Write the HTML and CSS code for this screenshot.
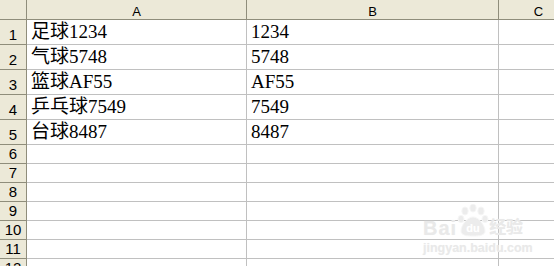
FILE: index.html
```
<!DOCTYPE html>
<html>
<head>
    <meta charset="UTF-8">
    <title>Sheet1</title>
    <link rel="stylesheet" href="styles.css">
</head>
<body>
    <div class="sheet">
        <div class="corner"></div>
        <div class="colhead">A</div>
        <div class="colhead">B</div>
        <div class="colhead">C</div>

        <div class="rowhead">1</div>
        <div class="cell">足球1234</div>
        <div class="cell">1234</div>
        <div class="cell"></div>

        <div class="rowhead">2</div>
        <div class="cell">气球5748</div>
        <div class="cell">5748</div>
        <div class="cell"></div>

        <div class="rowhead">3</div>
        <div class="cell">篮球AF55</div>
        <div class="cell">AF55</div>
        <div class="cell"></div>

        <div class="rowhead">4</div>
        <div class="cell">乒乓球7549</div>
        <div class="cell">7549</div>
        <div class="cell"></div>

        <div class="rowhead">5</div>
        <div class="cell">台球8487</div>
        <div class="cell">8487</div>
        <div class="cell"></div>

        <div class="rowhead">6</div><div class="cell"></div><div class="cell"></div><div class="cell"></div>
        <div class="rowhead">7</div><div class="cell"></div><div class="cell"></div><div class="cell"></div>
        <div class="rowhead">8</div><div class="cell"></div><div class="cell"></div><div class="cell"></div>
        <div class="rowhead">9</div><div class="cell"></div><div class="cell"></div><div class="cell"></div>
        <div class="rowhead">10</div><div class="cell"></div><div class="cell"></div><div class="cell"></div>
        <div class="rowhead">11</div><div class="cell"></div><div class="cell"></div><div class="cell"></div>
        <div class="rowhead">12</div><div class="cell"></div><div class="cell"></div><div class="cell"></div>
    </div>

    <!-- baidu jingyan watermark -->
    <div class="mark">
        <div class="mark-top">
            <span class="mark-bai">Bai</span>
            <svg class="mark-paw" width="32" height="34" viewBox="0 0 32 34">
                <ellipse cx="8" cy="7" rx="3.2" ry="4" />
                <ellipse cx="16" cy="4" rx="3.2" ry="4" />
                <ellipse cx="24" cy="7" rx="3.2" ry="4" />
                <ellipse cx="4" cy="15" rx="3" ry="3.6" />
                <ellipse cx="28" cy="15" rx="3" ry="3.6" />
                <path d="M16 13 C10 13 4 22 4 27 C4 31 9 32 16 32 C23 32 28 31 28 27 C28 22 22 13 16 13 Z" />
                <text x="16" y="28" text-anchor="middle">du</text>
            </svg>
            <span class="mark-cn">经验</span>
        </div>
        <div class="mark-url">jingyan.baidu.com</div>
    </div>
</body>
</html>
```

FILE: styles.css
```
body{
    margin:0;
    overflow:hidden;
    background:#fff;
}
.sheet{
    display:grid;
    grid-template-columns:27px 220px 252px 80px;
    grid-template-rows:20px repeat(5, 25px) repeat(7, 19px);
}
.sheet>div{
    box-sizing:border-box;
    overflow:hidden;
    white-space:nowrap;
}
.corner,
.colhead,
.rowhead{
    background:#ece9d8;
    border-right:solid 1px #8f8d7b;
    border-bottom:solid 1px #8f8d7b;
    color:#000;
    font-family:"Liberation Sans", Arial, sans-serif;
}
.colhead{
    display:flex;
    align-items:flex-end;
    justify-content:center;
    font-size:13px;
    line-height:15px;
}
.rowhead{
    display:flex;
    align-items:flex-end;
    justify-content:center;
    font-size:15px;
    line-height:18px;
}
.cell{
    border-right:solid 1px #c0c0c0;
    border-bottom:solid 1px #c0c0c0;
    padding-left:4px;
    font-family:"Liberation Serif", "Noto Sans CJK SC", serif;
    font-size:19px;
    line-height:24px;
    color:#000;
}
.mark{
    position:absolute;
    left:423px;
    top:206px;
    width:104px;
    color:#e9e9e9;
    font-family:"Liberation Sans", "Noto Sans CJK SC", sans-serif;
    font-weight:bold;
    text-shadow:0 0 1px #f4f4f4;
}
.mark-top{
    display:flex;
    align-items:flex-end;
    height:32px;
}
.mark-bai{
    font-size:20px;
    line-height:20px;
    letter-spacing:1px;
}
.mark-paw{
    fill:#ececec;
    stroke:#f6f6f6;
    stroke-width:1;
}
.mark-paw text{
    fill:#fff;
    stroke:none;
    font-family:"Liberation Sans", sans-serif;
    font-size:11px;
    font-weight:bold;
}
.mark-cn{
    font-size:17px;
    line-height:20px;
}
.mark-url{
    margin-top:4px;
    font-size:12.5px;
    line-height:13px;
}
```
